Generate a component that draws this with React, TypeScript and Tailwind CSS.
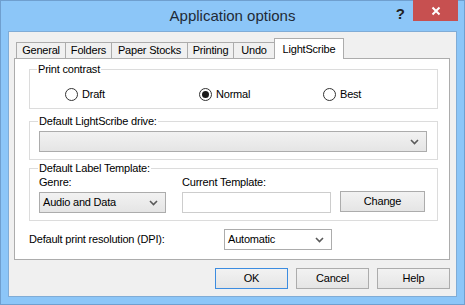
import React from 'react';

const font = { fontFamily: '"Liberation Sans", Arial, sans-serif' };

function Chevron() {
  return (
    <svg width="9" height="6" viewBox="0 0 9 6" className="shrink-0">
      <path d="M1 1 L4.5 4.5 L8 1" fill="none" stroke="#5a5a5a" strokeWidth="1.6" />
    </svg>
  );
}

function Radio({ label, checked }: { label: string; checked?: boolean }) {
  return (
    <div className="flex items-center gap-[4px]">
      <span className="w-[13px] h-[13px] rounded-full border border-[#333] bg-white flex items-center justify-center">
        {checked && <span className="w-[7px] h-[7px] rounded-full bg-[#1a1a1a]" />}
      </span>
      <span>{label}</span>
    </div>
  );
}

function Tab({ label, w, active }: { label: string; w: number; active?: boolean }) {
  if (active) {
    return (
      <div
        className="h-[21px] -mb-px -ml-px relative z-10 bg-white border border-b-0 border-[#acacac] flex items-center justify-center"
        style={{ width: w }}
      >
        {label}
      </div>
    );
  }
  return (
    <div
      className="h-[16px] -ml-px first:ml-0 bg-[#f0f0f0] border border-b-0 border-[#acacac] flex items-center justify-center"
      style={{ width: w }}
    >
      {label}
    </div>
  );
}

export default function App() {
  return (
    <div
      className="w-[465px] h-[305px] bg-[#8cc6f8] border border-[#6f9fcf] flex flex-col text-[11px] text-black tracking-[-0.2px]"
      style={font}
    >
      {/* Title bar */}
      <div className="h-[30px] relative flex items-center justify-center">
        <span className="text-[15px] text-[#1f2a36] tracking-normal mt-[1px]">Application options</span>
        <div className="absolute right-[6px] top-[-1px] flex items-start">
          <span className="text-[15px] font-bold text-[#222] mr-[8px] mt-[3px] tracking-normal">?</span>
          <div className="w-[45px] h-[21px] bg-[#c75050] flex items-center justify-center">
            <svg width="10" height="10" viewBox="0 0 10 10">
              <path d="M1.5 1.5 L8.5 8.5 M8.5 1.5 L1.5 8.5" stroke="white" strokeWidth="2" />
            </svg>
          </div>
        </div>
      </div>

      {/* Client area */}
      <div className="ml-[7px] w-[449px] h-[266px] bg-[#f0f0f0] border border-[#80acd6] flex flex-col">
        <div className="ml-[5px] mt-[6px] w-[436px] flex flex-col">
          <div className="flex items-end h-[20px] pl-[2px]">
            <Tab label="General" w={50} />
            <Tab label="Folders" w={47} />
            <Tab label="Paper Stocks" w={77} />
            <Tab label="Printing" w={47} />
            <Tab label="Undo" w={42} />
            <Tab label="LightScribe" w={70} active />
          </div>

          {/* Tab panel */}
          <div className="h-[202px] bg-white border border-[#acacac] flex flex-col pl-[14px]">
            <fieldset className="mt-[4px] w-[409px] h-[46px] border border-[#dcdcdc] pl-[7px]">
              <legend className="px-[1px] leading-[13px]">Print contrast</legend>
              <div className="flex items-center mt-[10px] pl-[28px]">
                <div className="w-[134px]"><Radio label="Draft" /></div>
                <div className="w-[124px]"><Radio label="Normal" checked /></div>
                <Radio label="Best" />
              </div>
            </fieldset>

            <fieldset className="mt-[6px] w-[409px] h-[45px] border border-[#dcdcdc] pl-[8px]">
              <legend className="px-[1px] leading-[13px]">Default LightScribe drive:</legend>
              <div className="mt-[3px] ml-[1px] w-[388px] h-[21px] border border-[#acacac] bg-gradient-to-b from-[#f2f2f2] to-[#e5e5e5] flex items-center justify-end pr-[7px]">
                <Chevron />
              </div>
            </fieldset>

            <fieldset className="mt-[2px] w-[409px] h-[59px] border border-[#dcdcdc] pl-[8px]">
              <legend className="px-[1px] leading-[13px]">Default Label Template:</legend>
              <div className="flex ml-[1px]">
                <div className="flex flex-col w-[143px]">
                  <span className="leading-[13px] mt-[1px]">Genre:</span>
                  <div className="mt-[3px] w-[127px] h-[21px] border border-[#acacac] bg-gradient-to-b from-[#f2f2f2] to-[#e5e5e5] flex items-center justify-between pl-[3px] pr-[7px]">
                    <span>Audio and Data</span>
                    <Chevron />
                  </div>
                </div>
                <div className="flex flex-col w-[158px]">
                  <span className="leading-[13px] mt-[1px]">Current Template:</span>
                  <div className="mt-[3px] w-[149px] h-[21px] border border-[#cdcdcd] bg-white" />
                </div>
                <div className="mt-[16px] w-[85px] h-[21px] border border-[#acacac] bg-gradient-to-b from-[#f2f2f2] to-[#e5e5e5] flex items-center justify-center">
                  Change
                </div>
              </div>
            </fieldset>

            <div className="mt-[8px] flex items-center">
              <span className="w-[195px]">Default print resolution (DPI):</span>
              <div className="w-[108px] h-[21px] border border-[#acacac] bg-white flex items-center justify-between pl-[3px] pr-[7px]">
                <span>Automatic</span>
                <Chevron />
              </div>
            </div>
          </div>
        </div>

        {/* Buttons */}
        <div className="mt-[8px] flex justify-end gap-[8px] pr-[6px]">
          <div className="w-[73px] h-[21px] border border-[#3c8ce0] bg-gradient-to-b from-[#f2f2f2] to-[#e5e5e5] flex items-center justify-center">OK</div>
          <div className="w-[73px] h-[21px] border border-[#acacac] bg-gradient-to-b from-[#f2f2f2] to-[#e5e5e5] flex items-center justify-center">Cancel</div>
          <div className="w-[73px] h-[21px] border border-[#acacac] bg-gradient-to-b from-[#f2f2f2] to-[#e5e5e5] flex items-center justify-center">Help</div>
        </div>
      </div>
    </div>
  );
}
